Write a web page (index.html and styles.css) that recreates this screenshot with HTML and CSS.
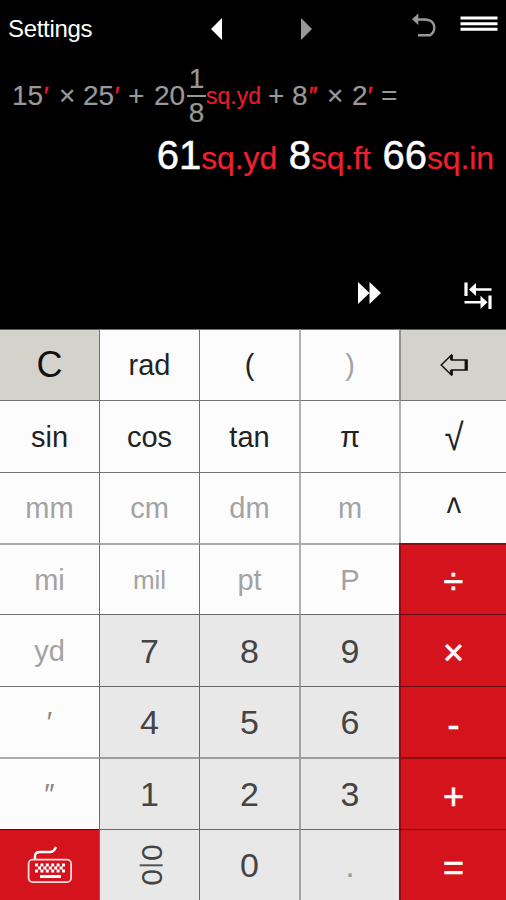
FILE: index.html
```html
<!DOCTYPE html>
<html lang="en">
<head>
<meta charset="utf-8">
<title>Calculator</title>
<link rel="stylesheet" href="styles.css">
</head>
<body>
<main class="app">
  <section class="display">
    <header class="bar">
      <span class="settings">Settings</span>
      <svg class="prev" width="12" height="22" viewBox="0 0 12 22"><path d="M11 0V22L0 11Z" fill="#fff"/></svg>
      <svg class="next" width="12" height="22" viewBox="0 0 12 22"><path d="M0 0V22L11 11Z" fill="#999"/></svg>
      <svg class="undo" width="26" height="26" viewBox="0 0 26 26"><path d="M3 6.5H14L18 7.5Q22.3 10 22.3 14.5Q22.3 19.5 18 22.3H6" fill="none" stroke="#999" stroke-width="2.4"/><path d="M0 6.2L6.3 0.5V12Z" fill="#999"/></svg>
      <svg class="menu" width="38" height="16" viewBox="0 0 38 16"><path d="M0.5 2H37.5M0.5 7.8H37.5M0.5 13.3H37.5" stroke="#fff" stroke-width="3"/></svg>
    </header>
    <div class="expression">
      <span>15</span><span class="unit prime">′</span><span>×</span><span>25</span><span class="unit prime">′</span><span>+</span><span>20</span>
      <span class="fraction"><span>1</span><i></i><span>8</span></span>
      <span class="unit word">sq.yd</span><span>+</span><span>8</span><span class="unit prime">″</span><span>×</span><span>2</span><span class="unit prime">′</span><span>=</span>
    </div>
    <div class="result"><b>61</b><span>sq.yd</span><b class="gap">8</b><span>sq.ft</span><b class="gap">66</b><span>sq.in</span></div>
    <div class="tools">
      <svg class="forward" width="24" height="22" viewBox="0 0 24 22"><path d="M0 0V22L11.5 11ZM11.5 0V22L23 11Z" fill="#fff"/></svg>
      <svg class="swap" width="28" height="28" viewBox="0 0 28 28"><path d="M2 0.5V14M26 13.5V27" stroke="#fff" stroke-width="3.2"/><path d="M10 7.5H27.5M0.5 20.2H18" stroke="#fff" stroke-width="2.6"/><path d="M5 7.5L12 1V14ZM23.5 20.2L16.5 13.7V26.7Z" fill="#fff"/></svg>
    </div>
  </section>
  <section class="keys">
    <button class="key tool big">C</button><button class="key">rad</button><button class="key paren">(</button><button class="key paren off">)</button>
    <button class="key tool"><svg class="back" width="28" height="22" viewBox="0 0 28 22"><path d="M1.2 11L11.5 1V6H27V16H11.5V21Z" fill="none" stroke="#111" stroke-width="1.5"/><path d="M26 6V16M11.5 1V6M11.5 16V21" stroke="#111" stroke-width="2.8"/></svg></button>

    <button class="key">sin</button><button class="key">cos</button><button class="key">tan</button><button class="key pi">π</button><button class="key root"><span>√</span></button>

    <button class="key off">mm</button><button class="key off">cm</button><button class="key off">dm</button><button class="key off">m</button><button class="key caret"><span>^</span></button>

    <button class="key off">mi</button><button class="key off small">mil</button><button class="key off">pt</button><button class="key off">P</button><button class="key op">÷</button>

    <button class="key off">yd</button><button class="key num">7</button><button class="key num">8</button><button class="key num">9</button><button class="key op">×</button>

    <button class="key off mark">′</button><button class="key num">4</button><button class="key num">5</button><button class="key num">6</button><button class="key op minus"><span>-</span></button>

    <button class="key off mark">″</button><button class="key num">1</button><button class="key num">2</button><button class="key num">3</button><button class="key op">+</button>

    <button class="key op board"><svg class="keyboard" width="46" height="40" viewBox="0 0 46 40"><rect x="1.6" y="14.6" width="42.5" height="22.5" rx="4" fill="none" stroke="#ffd9d9" stroke-width="1.8"/><path d="M8 14V11Q8 7 13 7H23Q27 7 29 2" fill="none" stroke="#fff" stroke-width="2.4"/><path d="M8 20H39M11 23H38M8 26H39" stroke="#fff" stroke-width="3" stroke-dasharray="3 2.4"/><path d="M13 31.5H34" stroke="#fff" stroke-width="3"/></svg></button>
    <button class="key num ratio"><span class="turn"><span>0</span><i></i><span>0</span></span></button><button class="key num">0</button><button class="key num dot">.</button><button class="key op equals">=</button>
  </section>
</main>
</body>
</html>
```
FILE: styles.css
```css
* { box-sizing: border-box; }
body { margin: 0; background: #000; font-family: "Liberation Sans", Arial, sans-serif; }
svg { display: block; flex: none; }
.app { width: 506px; height: 900px; display: flex; flex-direction: column; overflow: hidden; }
.display { height: 329px; display: flex; flex-direction: column; background: #000; color: #fff; }

.bar { height: 60px; display: flex; align-items: flex-start; }
.settings { width: 203px; padding: 15px 0 0 8px; font-size: 24px; line-height: 28px; letter-spacing: -.3px; }
.prev { margin: 18px 0 0 8px; }
.next { margin: 18px 0 0 78px; }
.undo { margin: 13px 0 0 99px; }
.menu { margin: 16px 0 0 22px; }

.expression { height: 72px; padding-left: 12px; display: grid; grid-template-columns: 32px 15px 24px 32px 13px 26px 33px 19px 62px 24px 17px 18px 25px 16px 13px 20px; align-items: center; font-size: 28px; line-height: 32px; color: #999; white-space: nowrap; -webkit-text-stroke: .2px currentColor; }
.unit { color: #e51d2a; }
.prime { font-size: 24px; -webkit-text-stroke: .6px currentColor; }
.word { font-size: 23px; }
.fraction { display: flex; flex-direction: column; align-items: center; line-height: 32px; }
.fraction i { width: 19px; height: 2px; background: #999; }
.result { height: 48px; padding-right: 12px; display: flex; justify-content: flex-end; align-items: baseline; line-height: 46px; white-space: nowrap; }
.result b { font-weight: 400; font-size: 40px; -webkit-text-stroke: .5px currentColor; }
.result span { font-size: 32px; color: #f0202d; letter-spacing: -.1px; -webkit-text-stroke: .2px currentColor; }
.result .gap { margin-left: 11.5px; }
.tools { height: 149px; display: flex; align-items: flex-start; padding-left: 358px; }
.forward { margin-top: 102px; }
.swap { margin: 102px 0 0 82px; }

.keys { height: 571px; display: grid; grid-template-columns: 99px 100px 100px 100px 107px; grid-template-rows: 71px 72px 71px 71px 72px 71px 72px 71px; }
.key { min-width: 0; margin: 0; padding: 0; border: 0 solid rgba(0,0,0,.55); border-width: 1px 0 0 1px; display: flex; align-items: center; justify-content: center; background: #fcfcfc; color: #222; font: 29px/32px "Liberation Sans", Arial, sans-serif; }
.key:nth-child(5n+1) { border-left-width: 0; }
.key:nth-child(5n+4), .key:nth-child(5n) { border-left-width: 2px; border-left-color: rgba(0,0,0,.3); }
.key:nth-child(n+16):nth-child(-n+20), .key:nth-child(n+31):nth-child(-n+35) { border-top-width: 2px; border-top-color: rgba(0,0,0,.32); }
.key.tool { background: #d3d3cb; }
.key.big { font-size: 36px; color: #111; }
.key.off { color: #a3a3a3; }
.key.small { font-size: 26px; }
.key.mark { color: #888; }
.key.num { background: #e8e8e8; color: #444; font-size: 34px; }
.key.dot { color: #999; }
.key.op { padding-top: 5px; background: #d5131d; color: #fff; font-size: 36px; -webkit-text-stroke: .6px #fff; }
.key.board { padding-top: 0; }
.root span { transform: scale(1.2, 1.3); }
.caret span { transform: scale(1.05, 1.45); transform-origin: 50% 20%; }
.turn { display: flex; align-items: center; transform: translateX(2px) rotate(90deg); font-size: 30px; }
.turn i { width: 2px; height: 23px; margin: 0 3px; background: #555; }
```
